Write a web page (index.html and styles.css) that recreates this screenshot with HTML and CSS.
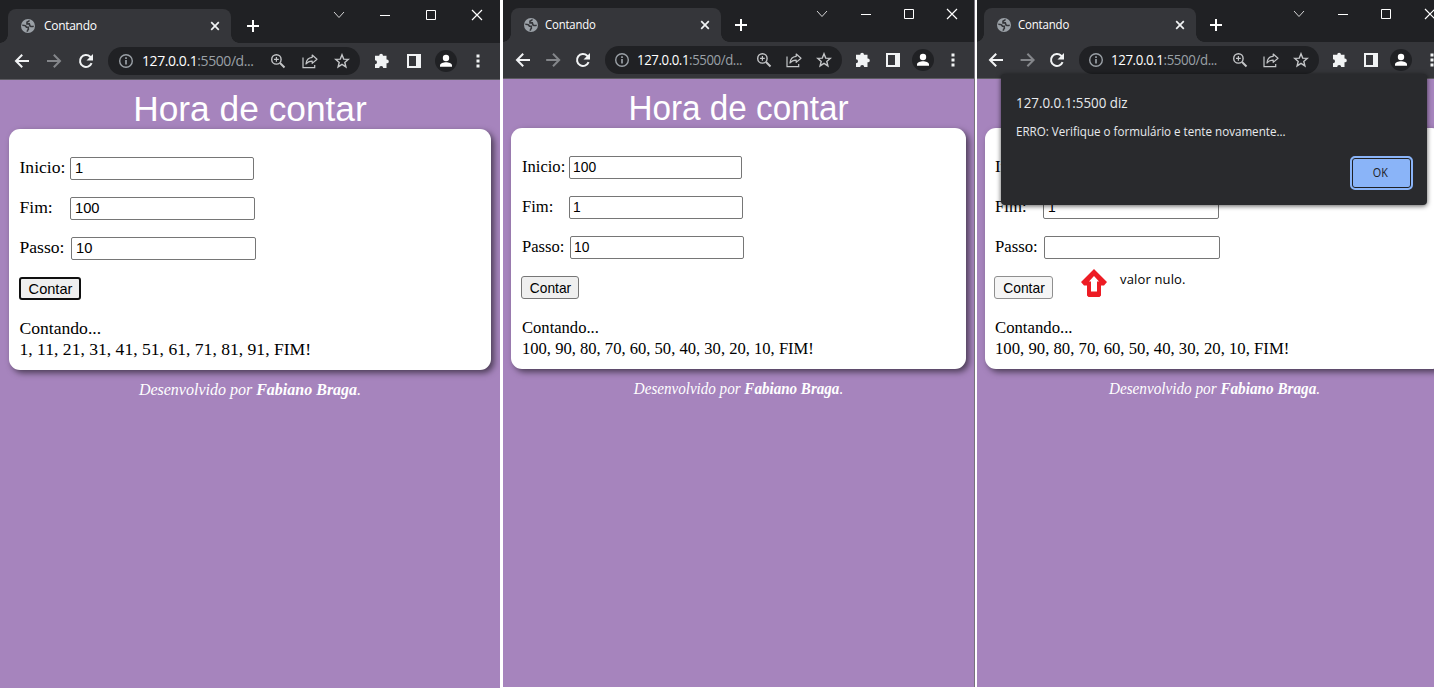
FILE: index.html
```html
<!DOCTYPE html>
<html lang="pt-br">
<head>
<meta charset="utf-8">
<title>Contando</title>
<link rel="stylesheet" href="styles.css">
</head>
<body>
<svg class="defs" aria-hidden="true">
  <symbol id="globe" viewBox="0 0 14 14"><circle cx="7" cy="7" r="7" fill="#9aa0a6"/><path d="M1.300 6.300C3.500 6.300 5 7 5.500 8.200h1.800v2.300c-.7.200-1 .8-1 2.200M8.300 1.400C8 2.600 7 2.300 6 3.200v1.700h2.300l.6 1.900c1 .9 2.300.9 3.800.5" fill="none" stroke="#35363a" stroke-width="1.600"/></symbol>
  <symbol id="x" viewBox="0 0 10 10"><path d="M1.200 1.200l7.600 7.600M8.800 1.200 1.200 8.800" fill="none" stroke="#f1f3f4" stroke-width="1.700"/></symbol>
  <symbol id="plus" viewBox="0 0 12 12"><path d="M6 0v12M0 6h12" stroke="#fff" stroke-width="2"/></symbol>
  <symbol id="chev" viewBox="0 0 12 12"><path d="M1 3l5 5.500L11 3" fill="none" stroke="#d5d5d6" stroke-width="1"/></symbol>
  <symbol id="min" viewBox="0 0 12 12"><path d="M1 6.500h10" stroke="#fff"/></symbol>
  <symbol id="max" viewBox="0 0 12 12"><path d="M1.500 1.500h9v9h-9z" fill="none" stroke="#fff"/></symbol>
  <symbol id="cls" viewBox="0 0 12 12"><path d="M1 1l10 10M11 1 1 11" stroke="#fff" stroke-width="1.200"/></symbol>
  <symbol id="back" viewBox="0 0 16 16"><path d="M15 8H2.500M8.200 1.800 2 8l6.200 6.200" fill="none" stroke="currentColor" stroke-width="2"/></symbol>
  <symbol id="reload" viewBox="0 0 16 16"><path d="M13.600 10.200A6 6 0 1 1 12.200 3.700L14 5.500" fill="none" stroke="#f1f3f4" stroke-width="2"/><path d="M15 1v6.500H8.500z" fill="#f1f3f4"/></symbol>
  <symbol id="info" viewBox="0 0 16 16"><circle cx="8" cy="8" r="6.300" fill="none" stroke="#9aa0a6" stroke-width="1.400"/><path d="M8 7v4.500M8 4.300v1.600" stroke="#9aa0a6" stroke-width="1.700"/></symbol>
  <symbol id="zoom" viewBox="0 0 16 16"><circle cx="6.400" cy="6.400" r="4.700" fill="none" stroke="#c4c6c8" stroke-width="1.400"/><path d="M4 6.400h4.800M6.400 4v4.800" stroke="#c4c6c8" stroke-width="1.200"/><path d="M10 10l4.500 4.500" stroke="#c4c6c8" stroke-width="1.900"/></symbol>
  <symbol id="share" viewBox="0 0 16 16"><path d="M1 4.500v10.200h11.700V12" fill="none" stroke="#c4c6c8" stroke-width="1.200"/><path d="M10.200 2 15 6.200l-4.800 4.200V8.100C7.400 8 5.500 9 4 11c.3-3.600 2.200-6.400 6.200-6.700z" fill="none" stroke="#c4c6c8" stroke-width="1.200" stroke-linejoin="round"/></symbol>
  <symbol id="star" viewBox="0 0 16 16"><path d="M8 1.800l1.700 4.300 4.600.3-3.500 3 1.100 4.500L8 11.400l-3.900 2.500 1.100-4.500-3.500-3 4.600-.3z" fill="none" stroke="#c4c6c8" stroke-width="1.400"/></symbol>
  <symbol id="puzzle" viewBox="0 0 16 16"><path d="M5.200 2.700a1.900 1.900 0 0 1 3.800 0h3.500v3.800h.4a1.900 1.900 0 0 1 0 3.800h-.4V15H9.200a2 2 0 0 0-4 0H1v-3.700a2 2 0 0 0 0-4V2.700z" fill="#f1f3f4"/></symbol>
  <symbol id="panel" viewBox="0 0 16 16"><path d="M1 1h14v14H1zM3 3v10h7V3z" fill="#f1f3f4" fill-rule="evenodd"/></symbol>
  <symbol id="user" viewBox="0 0 22 22"><circle cx="11" cy="11" r="11" fill="#202124"/><circle cx="11" cy="8" r="3.200" fill="#fff"/><path d="M5 16.800v-1.500c0-2 3.500-3.100 6-3.100s6 1.100 6 3.100v1.500z" fill="#fff"/></symbol>
  <symbol id="dots" viewBox="0 0 16 16"><path d="M6.500 1.500h3v3h-3zM6.500 6.500h3v3h-3zM6.500 11.500h3v3h-3z" fill="#f1f3f4"/></symbol>
</svg>
<main class="shots">
  <section class="window first">
    <div class="inner">
      <header class="strip">
        <div class="tab"><svg class="fav"><use href="#globe"/></svg><span class="t tab-title">Contando</span><svg class="tab-x"><use href="#x"/></svg></div>
        <svg class="plus"><use href="#plus"/></svg>
        <div class="controls"><i><svg><use href="#chev"/></svg></i><i><svg><use href="#min"/></svg></i><i><svg><use href="#max"/></svg></i><i><svg><use href="#cls"/></svg></i></div>
      </header>
      <nav class="toolbar">
        <i><svg><use href="#back"/></svg></i><i class="fwd"><svg><use href="#back"/></svg></i><i><svg><use href="#reload"/></svg></i>
        <div class="pill"><i><svg><use href="#info"/></svg></i><span class="t url"><b>127.0.0.1</b>:5500/d...</span><i><svg><use href="#zoom"/></svg></i><i><svg><use href="#share"/></svg></i><i><svg><use href="#star"/></svg></i></div>
        <i><svg><use href="#puzzle"/></svg></i><i><svg><use href="#panel"/></svg></i><i><svg class="user"><use href="#user"/></svg></i><i><svg><use href="#dots"/></svg></i>
      </nav>
      <div class="page">
        <h1>Hora de contar</h1>
        <div class="card">
          <div class="row r1"><label class="t">Inicio:</label><div class="field"><span class="t">1</span></div></div>
          <div class="row r2"><label class="t">Fim:</label><div class="field"><span class="t">100</span></div></div>
          <div class="row r3"><label class="t">Passo:</label><div class="field"><span class="t">10</span></div></div>
          <button class="btn focus"><span>Contar</span></button>
          <div class="out"><span class="t">Contando...</span><span class="t">1, 11, 21, 31, 41, 51, 61, 71, 81, 91, FIM!</span></div>
        </div>
        <footer>Desenvolvido por <b>Fabiano Braga</b>.</footer>
      </div>
    </div>
  </section>
  <section class="window second">
    <div class="inner">
      <header class="strip">
        <div class="tab"><svg class="fav"><use href="#globe"/></svg><span class="t tab-title">Contando</span><svg class="tab-x"><use href="#x"/></svg></div>
        <svg class="plus"><use href="#plus"/></svg>
        <div class="controls"><i><svg><use href="#chev"/></svg></i><i><svg><use href="#min"/></svg></i><i><svg><use href="#max"/></svg></i><i><svg><use href="#cls"/></svg></i></div>
      </header>
      <nav class="toolbar">
        <i><svg><use href="#back"/></svg></i><i class="fwd"><svg><use href="#back"/></svg></i><i><svg><use href="#reload"/></svg></i>
        <div class="pill"><i><svg><use href="#info"/></svg></i><span class="t url"><b>127.0.0.1</b>:5500/d...</span><i><svg><use href="#zoom"/></svg></i><i><svg><use href="#share"/></svg></i><i><svg><use href="#star"/></svg></i></div>
        <i><svg><use href="#puzzle"/></svg></i><i><svg><use href="#panel"/></svg></i><i><svg class="user"><use href="#user"/></svg></i><i><svg><use href="#dots"/></svg></i>
      </nav>
      <div class="page">
        <h1>Hora de contar</h1>
        <div class="card">
          <div class="row r1"><label class="t">Inicio:</label><div class="field"><span class="t">100</span></div></div>
          <div class="row r2"><label class="t">Fim:</label><div class="field"><span class="t">1</span></div></div>
          <div class="row r3"><label class="t">Passo:</label><div class="field"><span class="t">10</span></div></div>
          <button class="btn"><span>Contar</span></button>
          <div class="out"><span class="t">Contando...</span><span class="t">100, 90, 80, 70, 60, 50, 40, 30, 20, 10, FIM!</span></div>
        </div>
        <footer>Desenvolvido por <b>Fabiano Braga</b>.</footer>
      </div>
    </div>
  </section>
  <section class="window third">
    <div class="inner">
      <header class="strip">
        <div class="tab"><svg class="fav"><use href="#globe"/></svg><span class="t tab-title">Contando</span><svg class="tab-x"><use href="#x"/></svg></div>
        <svg class="plus"><use href="#plus"/></svg>
        <div class="controls"><i><svg><use href="#chev"/></svg></i><i><svg><use href="#min"/></svg></i><i><svg><use href="#max"/></svg></i><i><svg><use href="#cls"/></svg></i></div>
      </header>
      <nav class="toolbar">
        <i><svg><use href="#back"/></svg></i><i class="fwd"><svg><use href="#back"/></svg></i><i><svg><use href="#reload"/></svg></i>
        <div class="pill"><i><svg><use href="#info"/></svg></i><span class="t url"><b>127.0.0.1</b>:5500/d...</span><i><svg><use href="#zoom"/></svg></i><i><svg><use href="#share"/></svg></i><i><svg><use href="#star"/></svg></i></div>
        <i><svg><use href="#puzzle"/></svg></i><i><svg><use href="#panel"/></svg></i><i><svg class="user"><use href="#user"/></svg></i><i><svg><use href="#dots"/></svg></i>
      </nav>
      <div class="page">
        <div class="card">
          <div class="row r1"><label class="t">In</label></div>
          <div class="row r2"><label class="t">Fim:</label><div class="field"><span class="t">1</span></div></div>
          <div class="row r3"><label class="t">Passo:</label><div class="field"></div></div>
          <button class="btn light"><span>Contar</span></button>
          <div class="out"><span class="t">Contando...</span><span class="t">100, 90, 80, 70, 60, 50, 40, 30, 20, 10, FIM!</span></div>
        </div>
        <footer>Desenvolvido por <b>Fabiano Braga</b>.</footer>
      </div>
    </div>
    <div class="note"><svg class="arrow" viewBox="0 0 26 28"><path d="M13 0 26 13 23 16.500H20V26.500L18.500 28H7.500L6 26.500V16.500H3L0 13z" fill="#ed1c24"/><path d="M13 7 18 12.500H16V22.500H10V12.500H8z" fill="#fff"/></svg><span>valor nulo.</span></div>
    <div class="dialog">
      <div class="dialog-title"><span>127.0.0.1:5500 diz</span></div>
      <div class="dialog-msg"><span>ERRO: Verifique o formulário e tente novamente...</span></div>
      <button class="ok"><span>OK</span></button>
    </div>
  </section>
</main>
</body>
</html>
```

FILE: styles.css
```css
* { box-sizing: border-box; }
body { margin: 0; width: 1434px; height: 692px; overflow: hidden; background: #fff; }
.defs { position: absolute; width: 0; height: 0; }
.shots { display: flex; width: 1434px; overflow: hidden; align-items: flex-start; }

.window { position: relative; flex: none; overflow: hidden; background: #a684bd; }
.first { --s: 1; --p: 32px; --c: 46px; --w: 500px; --tab: 223px; --tl: 8px; --strip: 43px; --start: 6px; --pill: 252px;
  --label: 51px; --field: 184px; --btn: 62px; --pad: 10px; --cardl: 9px; --cardw: 482px; --tt: 15px; width: 500px; height: 688px; margin-right: 3px; }
.second { --s: .942; --p: 30.2px; --c: 43.4px; --w: 471px; --tab: 210px; --tl: 8px; --strip: 42px; --start: 5px; --pill: 237px;
  --label: 48px; --field: 173px; --btn: 58px; --pad: 10px; --cardl: 8px; --cardw: 455px; --tt: 14px; width: 472px; height: 687px; margin-right: 2px; border-right: 1px solid #77717c; }
.third { --s: .95; --p: 30.6px; --c: 43.8px; --w: 475px; --tab: 212px; --tl: 7px; --strip: 42px; --start: 4px; --pill: 240px;
  --label: 49px; --field: 175px; --btn: 59px; --pad: 9px; --cardl: 8px; --cardw: 458px; --tt: 13px; width: 457px; height: 687px; }
.inner { width: var(--w); }
.t { display: inline-block; transform: scaleX(var(--s)); transform-origin: 0 50%; white-space: nowrap; }
svg { display: block; flex: none; overflow: visible; }

.strip { display: flex; height: var(--strip); background: #202124; padding-left: var(--tl); }
.tab { position: relative; display: flex; align-items: center; width: var(--tab); height: 34px; margin-top: calc(var(--strip) - 34px);
  border-radius: 8px 8px 0 0; background: #35363a; padding: 0 11px 0 13px; }
.tab::before, .tab::after { content: ""; position: absolute; bottom: 0; width: 8px; height: 8px; }
.tab::before { left: -8px; background: radial-gradient(circle at 0 0, transparent 7.5px, #35363a 8px); }
.tab::after { right: -8px; background: radial-gradient(circle at 100% 0, transparent 7.5px, #35363a 8px); }
.fav { width: 14px; height: 14px; margin-right: calc(var(--tt) - 6px); }
.tab-title { flex: 1; font: 12px/16px "Open Sans", sans-serif; letter-spacing: -.3px; margin-top: -1px; color: #fff; }
.tab-x { width: 10px; height: 10px; }
.second .tab-title, .third .tab-title { letter-spacing: -.15px; margin-left: -1px; }
.third .tab-title { margin-left: 0; }
.plus { width: 12px; height: 12px; margin: calc(var(--strip) - 23px) 0 0 16px; }
.second .plus, .third .plus { margin-left: 14px; }
.controls { display: flex; margin: calc(var(--strip) - 34px) 0 0 auto; height: 12px; }
.controls i { width: var(--c); display: flex; justify-content: center; }
.controls svg { width: 12px; height: 12px; }

.toolbar { display: flex; align-items: center; height: 37px; padding: 0 0 1px var(--start); background: #35363a; border-bottom: 1px solid #5d5c62; color: #f1f3f4; }
.toolbar i { width: var(--p); display: flex; justify-content: center; flex: none; }
.toolbar svg { width: 16px; height: 16px; }
.toolbar svg.user { width: 22px; height: 22px; }
.toolbar .fwd { color: #84868a; transform: scaleX(-1); }
.pill { display: flex; align-items: center; flex: none; width: var(--pill); height: 28px; margin: 0 6px; padding: 0 2px; background: #202124; border-radius: 14px; }
.url { flex: 1; width: 0; font: 14px "Open Sans", sans-serif; letter-spacing: -.42px; color: #9aa0a6; }
.url b { font-weight: 400; color: #fff; }

.page { position: relative; padding-top: 49px; font-family: "Liberation Serif", serif; font-size: 17.6px; line-height: 21px; }
h1 { margin: -49px 0 0; height: 49px; padding-top: 9px; text-align: center; font: 35.3px/40px "Liberation Sans", sans-serif; color: #fff; transform: scaleX(var(--s)); }
.card { margin-left: var(--cardl); width: var(--cardw); height: 241px; padding: 28px 0 0 calc(var(--pad) + .5px); border-radius: 11px; background: #fff; box-shadow: 3px 3px 6px rgba(0, 0, 0, .55); color: #000; }
.row { display: flex; height: 23px; margin-bottom: 17px; }
.row label { width: calc(var(--label) - .5px); flex: none; }
.field { width: var(--field); height: 23px; border: 1px solid #767676; border-radius: 2px; padding-left: 4px; font: 14.7px/21px "Liberation Sans", sans-serif; }
.second .field { padding-left: 3px; }
.r2 .field { width: calc(var(--field) + 1px); }
.r3 .field { margin-left: 1px; width: calc(var(--field) + 1px); }
.btn { display: block; width: var(--btn); height: 23px; margin-left: -.5px; padding: 0; border: 1px solid #767676; border-radius: 3px; background: #efefef; font: 14.6px/20px "Liberation Sans", sans-serif; color: #000; }
.btn span { display: block; margin: 0 -3px; transform: translateX(.5px) scaleX(var(--s)); }
.btn.focus { border: 2px solid #101010; line-height: 18px; }
.btn.light { background: #f5f5f5; border-color: #8f8f8f; }
.out { display: flex; flex-direction: column; align-items: flex-start; margin-top: 18px; }
footer { margin-top: 9px; text-align: center; font-size: 16px; font-style: italic; color: #fff; transform: scaleX(var(--s)); }

.note { position: absolute; left: 104px; top: 269px; display: flex; font: 13px/20px "Open Sans", sans-serif; letter-spacing: .15px; color: #000; }
.arrow { width: 26px; height: 28px; margin-right: 13px; }
.dialog { position: absolute; left: 24px; top: 74px; width: 426px; height: 131px; padding: 18px 14px 15px 15px; display: flex; flex-direction: column; align-items: flex-start;
  background: #292a2d; border-radius: 4px; box-shadow: 0 1px 5px rgba(0, 0, 0, .65); color: #e8eaed; font-family: "Open Sans", sans-serif; white-space: nowrap; }
.dialog span { display: inline-block; transform-origin: 0 50%; }
.dialog-title { font-size: 14.5px; line-height: 22px; }
.dialog-title span { transform: scaleX(.92); }
.dialog-msg { margin-top: 9px; font-size: 12px; line-height: 18px; }
.dialog-msg span { transform: scaleX(.967); }
.ok { width: 63px; height: 34px; margin: auto 0 0 auto; border: 2px solid #8ab4f8; border-radius: 5px; background: #8ab4f8; box-shadow: inset 0 0 0 1px #202124; color: #202124; font: 12px/28px "Open Sans", sans-serif; padding: 0 2px 1px 0; }
.ok span { transform-origin: 50% 50%; transform: scaleX(.9); }
```
